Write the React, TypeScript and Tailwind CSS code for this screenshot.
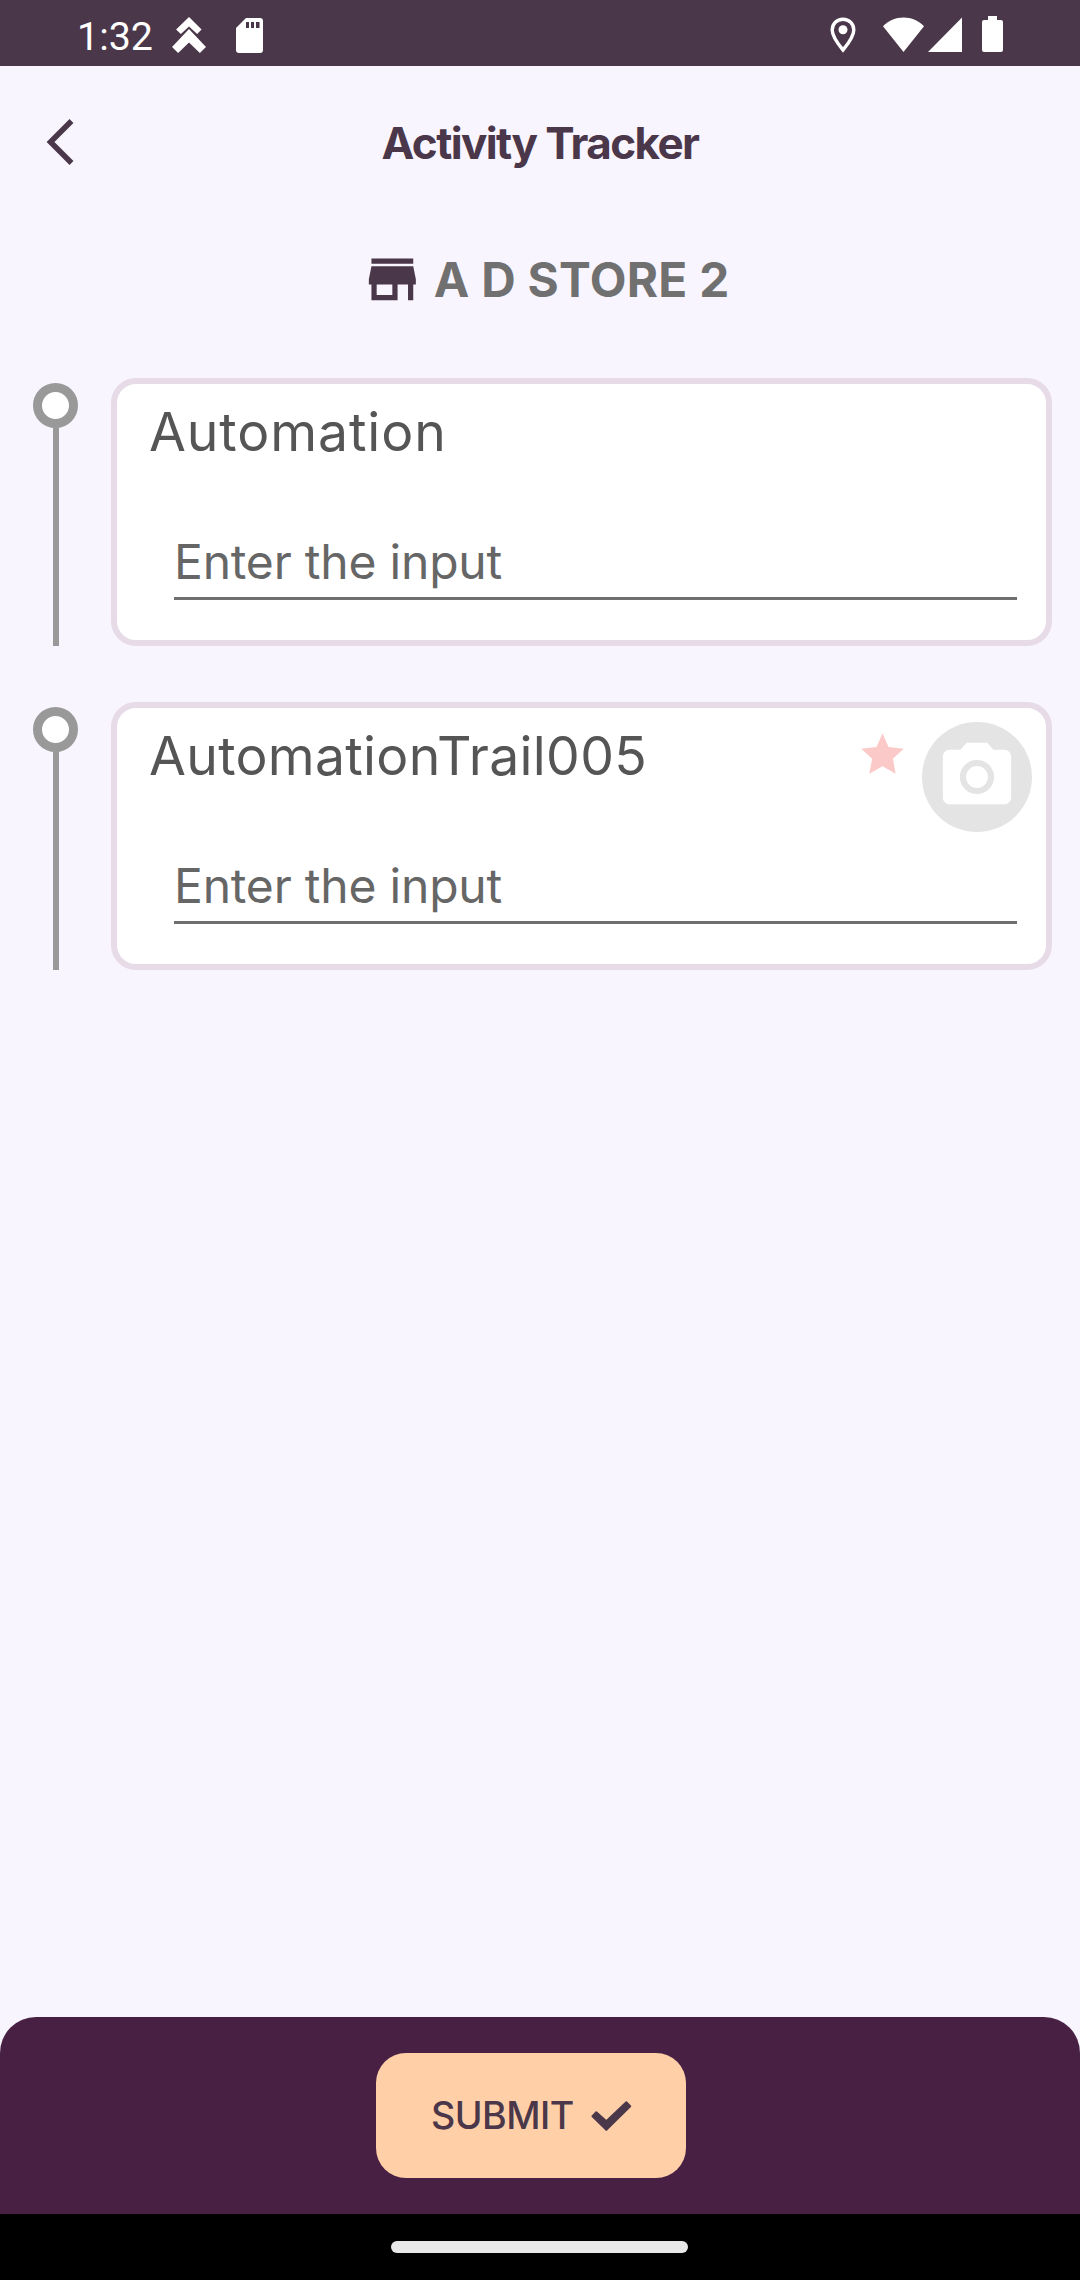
import type { ReactNode } from 'react';

function StatusBar() {
  return (
    <div className="flex h-[66px] shrink-0 items-center bg-[#4b374a] pr-[77px] pl-[77px] text-white">
      <span className="mt-[7px] w-[95px] font-['Roboto',sans-serif] text-[39.4px] leading-[60px]">1:32</span>
      <svg className="mt-[4px] h-[36px] w-[34px]" viewBox="0 0 100 106" fill="currentColor">
        <path d="M50 0 87 37 74 50 50 28 26 50 12 37Z" />
        <path d="M50 35 100 88 82 106 50 75 18 106 0 88Z" />
      </svg>
      <svg className="mt-[4px] ml-[30px] h-[35px] w-[27px]" viewBox="0 0 27 35">
        <path fill="currentColor" d="M10 0H24a3 3 0 0 1 3 3V32a3 3 0 0 1-3 3H3a3 3 0 0 1-3-3V10Z" />
        <path fill="#4b374a" d="M10 4h3v6h-3zM15 4h3v6h-3zM20 4h3.5v6H20z" />
      </svg>
      <svg className="mt-[3px] ml-auto h-[36px] w-[26px]" viewBox="0 0 26 36">
        <path
          fill="none"
          stroke="currentColor"
          strokeWidth="3.4"
          d="M13 2.2C6.9 2.2 2.2 6.9 2.2 13c0 7 7.2 15.6 10.8 20 3.6-4.4 10.8-13 10.8-20 0-6.1-4.7-10.8-10.8-10.8Z"
        />
        <circle cx="13" cy="12.7" r="4.5" fill="currentColor" />
      </svg>
      <svg className="mt-[3px] ml-[27px] h-[35px] w-[41px]" viewBox="0 0 41 35" fill="currentColor">
        <path d="M0 9.3C5.5 3.5 12.5.4 20.5.4S35.5 3.5 41 9.3L20.5 35Z" />
      </svg>
      <svg className="mt-[3px] ml-[4px] h-[35px] w-[34px]" viewBox="0 0 34 35" fill="currentColor">
        <path d="M34 .5V35H0Z" />
      </svg>
      <svg className="mt-[2px] ml-[20px] h-[36px] w-[21px]" viewBox="0 0 21 36" fill="currentColor">
        <path d="M6 0h9v4h4a2 2 0 0 1 2 2v28a2 2 0 0 1-2 2H2a2 2 0 0 1-2-2V6a2 2 0 0 1 2-2h4Z" />
      </svg>
    </div>
  );
}

function Header() {
  return (
    <header className="grid h-[152px] shrink-0 grid-cols-[120px_1fr_120px] items-center text-[#4b374a]">
      <svg className="ml-[46px] h-[46px] w-[28px]" viewBox="0 0 28 46" fill="none" stroke="currentColor" strokeWidth="5.5">
        <path d="M25.5 2 4.5 23 25.5 44" />
      </svg>
      <h1 className="mt-[2px] text-center text-[44px] leading-[60px] font-bold tracking-[-1.6px]">Activity Tracker</h1>
    </header>
  );
}

function StoreName() {
  return (
    <div className="flex h-[122px] shrink-0 items-center pt-px pl-[361px]">
      <svg className="h-[62.7px] w-[62.7px]" viewBox="0 0 24 24" fill="#4b374a">
        <path d="M20 4H4v2h16V4zm1 10v-2l-1-5H4l-1 5v2h1v6h10v-6h4v6h2v-6h1zm-9 4H6v-4h6v4z" />
      </svg>
      <h2 className="mt-px ml-[10px] text-[47.7px] leading-[60px] font-[650] tracking-[0.3px] whitespace-nowrap text-[#707070]">
        A D STORE 2
      </h2>
    </div>
  );
}

function RequiredPhoto() {
  return (
    <div className="mt-[14px] mr-[14px] flex">
      <svg className="mt-[7px] mr-[14px] h-[51px] w-[51px]" viewBox="0 0 24 24" fill="#fbc9c7">
        <path d="M12 17.5 18.18 21l-1.3-7.03L22 9.24l-7.19-.8L12 2 9.19 8.44 2 9.24l5.12 4.73L5.82 21z" />
      </svg>
      <div className="flex size-[110px] items-center justify-center rounded-full bg-[#e4e4e4] text-white">
        <svg className="size-[82px]" viewBox="0 0 24 24" fill="currentColor">
          <circle cx="12" cy="12" r="3.2" />
          <path d="M9 2 7.17 4H4c-1.1 0-2 .9-2 2v12c0 1.1.9 2 2 2h16c1.1 0 2-.9 2-2V6c0-1.1-.9-2-2-2h-3.17L15 2H9zm3 15c-2.76 0-5-2.24-5-5s2.24-5 5-5 5 2.24 5 5-2.24 5-5 5z" />
        </svg>
      </div>
    </div>
  );
}

function Activity({ title, action }: { title: ReactNode; action?: ReactNode }) {
  return (
    <section className="flex h-[268px] pr-[28px] pl-[33px]">
      <div className="flex w-[78px] flex-col pt-[5px]">
        <div className="size-[45px] shrink-0 rounded-full border-9 border-[#999999] bg-white" />
        <div className="-mt-px ml-[20px] w-[6px] grow bg-[#999999]" />
      </div>
      <div className="flex grow flex-col rounded-[25px] border-6 border-[#e6dbe7] bg-white">
        <div className="flex h-[144px] justify-between">
          <h3 className="mt-[18px] pl-[32px] text-[53.5px] leading-[60px] font-normal text-[#555555]">{title}</h3>
          {action}
        </div>
        <div className="mr-[29px] ml-[57px] h-[72px] border-b-3 border-[#6f6f6f] pt-[4px] text-[48px] leading-[60px] font-normal tracking-[-0.2px] text-[#666666]">
          Enter the input
        </div>
      </div>
    </section>
  );
}

function Footer() {
  return (
    <footer className="shrink-0">
      <div className="flex h-[197px] justify-center rounded-t-[36px] bg-[#472044] pt-[36px] pr-[18px]">
        <button className="flex h-[125px] w-[310px] items-center rounded-[30px] bg-[#ffcfa8] pl-[55px] text-[#4b374a]">
          <span className="w-[160px] text-left text-[37.6px] leading-[60px] font-medium tracking-[-0.5px]">SUBMIT</span>
          <svg
            className="h-[30px] w-[41px]"
            viewBox="0 0 41 30"
            fill="currentColor"
            stroke="currentColor"
            strokeWidth="2"
            strokeLinejoin="round"
          >
            <path d="M1.5 15.2 5.3 11.2 15.3 20.3 35.3 1.3 39.2 5.2 15.3 28.9Z" />
          </svg>
        </button>
      </div>
      <div className="flex h-[66px] justify-center bg-black pt-[27px] pr-px">
        <div className="h-[12px] w-[297px] rounded-full bg-[#e9e9e9]" />
      </div>
    </footer>
  );
}

export default function App() {
  return (
    <div className="flex h-[2280px] w-[1080px] flex-col overflow-hidden bg-[#f8f5ff] font-['Inter',sans-serif]">
      <StatusBar />
      <Header />
      <StoreName />
      <main className="flex grow flex-col gap-[56px] pt-[38px]">
        <Activity title={<span className="tracking-[0.9px]">Automation</span>} />
        <Activity title={<span className="tracking-[0.3px]">AutomationTrail005</span>} action={<RequiredPhoto />} />
      </main>
      <Footer />
    </div>
  );
}
